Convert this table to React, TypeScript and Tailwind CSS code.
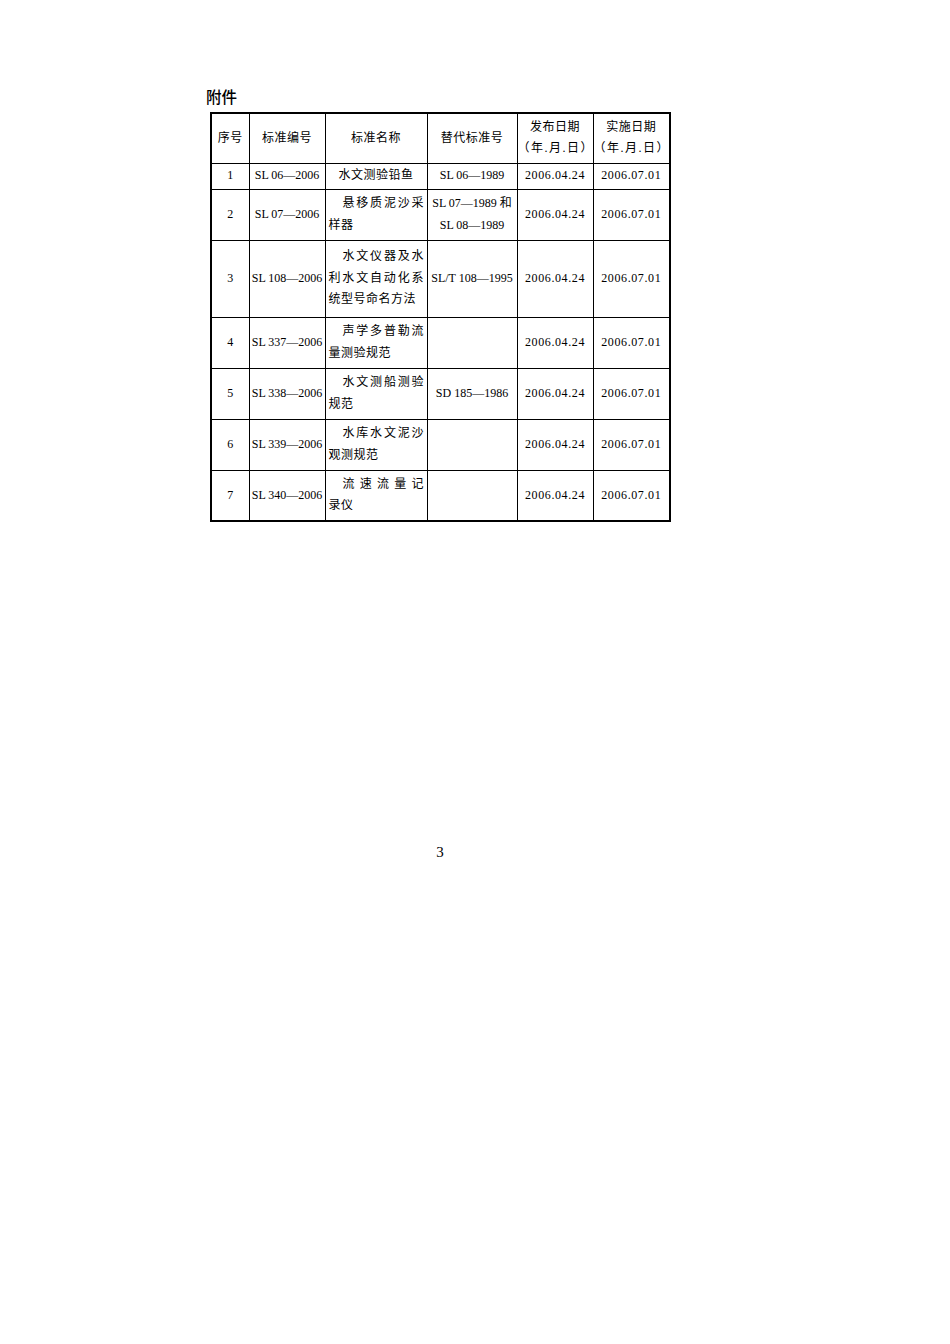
import React from 'react';

type Row = {
  no: string;
  code: string;
  name: string[];
  replaced: string[];
  issued: string;
  effective: string;
  h: string;
};

const rows: Row[] = [
  { no: '1', code: 'SL 06—2006', name: ['水文测验铅鱼'], replaced: ['SL 06—1989'], issued: '2006.04.24', effective: '2006.07.01', h: 'h-[26px]' },
  { no: '2', code: 'SL 07—2006', name: ['悬移质泥沙采', '样器'], replaced: ['SL 07—1989 和', 'SL 08—1989'], issued: '2006.04.24', effective: '2006.07.01', h: 'h-[51px]' },
  { no: '3', code: 'SL 108—2006', name: ['水文仪器及水', '利水文自动化系', '统型号命名方法'], replaced: ['SL/T 108—1995'], issued: '2006.04.24', effective: '2006.07.01', h: 'h-[77px]' },
  { no: '4', code: 'SL 337—2006', name: ['声学多普勒流', '量测验规范'], replaced: [], issued: '2006.04.24', effective: '2006.07.01', h: 'h-[51px]' },
  { no: '5', code: 'SL 338—2006', name: ['水文测船测验', '规范'], replaced: ['SD 185—1986'], issued: '2006.04.24', effective: '2006.07.01', h: 'h-[51px]' },
  { no: '6', code: 'SL 339—2006', name: ['水库水文泥沙', '观测规范'], replaced: [], issued: '2006.04.24', effective: '2006.07.01', h: 'h-[51px]' },
  { no: '7', code: 'SL 340—2006', name: ['流速流量记', '录仪'], replaced: [], issued: '2006.04.24', effective: '2006.07.01', h: 'h-[51px]' },
];

const cell = 'border border-black text-center align-middle p-0';

// 名称栏：首行缩进，除末行外两端对齐
function NameCell({ lines }: { lines: string[] }) {
  if (lines.length === 1) {
    return <div className="tracking-[0.5px]">{lines[0]}</div>;
  }
  return (
    <div className="px-[3px] text-left">
      {lines.map((line, i) => {
        const last = i === lines.length - 1;
        if (last) {
          return (
            <div key={i} className="tracking-[0.5px]">
              {line}
            </div>
          );
        }
        return (
          <div key={i} className={`flex justify-between ${i === 0 ? 'pl-[14px]' : ''}`}>
            {line.split('').map((ch, j) => (
              <span key={j}>{ch}</span>
            ))}
          </div>
        );
      })}
    </div>
  );
}

export default function App() {
  return (
    <div
      className="w-[950px] h-[1344px] bg-white text-black pt-[86px] pl-[206px]"
      style={{ fontFamily: '"Liberation Serif", "Noto Sans CJK SC", serif' }}
    >
      <div
        className="text-[15.5px] leading-[20px] font-medium"
        style={{ fontFamily: '"Noto Sans CJK SC", sans-serif' }}
      >
        附件
      </div>

      <table className="mt-[6px] ml-[4px] border-collapse border-2 border-black text-[12px] leading-[21.5px] table-fixed w-[459px]">
        <colgroup>
          <col className="w-[38px]" />
          <col className="w-[76px]" />
          <col className="w-[102px]" />
          <col className="w-[90px]" />
          <col className="w-[76px]" />
          <col className="w-[77px]" />
        </colgroup>
        <thead>
          <tr className="h-[50px]">
            <th className={`${cell} font-normal tracking-[0.5px]`}>序号</th>
            <th className={`${cell} font-normal tracking-[0.5px]`}>标准编号</th>
            <th className={`${cell} font-normal tracking-[0.5px]`}>标准名称</th>
            <th className={`${cell} font-normal tracking-[0.5px]`}>替代标准号</th>
            <th className={`${cell} font-normal tracking-[0.5px] whitespace-nowrap`}>
              <div>发布日期</div>
              <div className="tracking-[1.5px]">（年.月.日）</div>
            </th>
            <th className={`${cell} font-normal tracking-[0.5px] whitespace-nowrap`}>
              <div>实施日期</div>
              <div className="tracking-[1.5px]">（年.月.日）</div>
            </th>
          </tr>
        </thead>
        <tbody>
          {rows.map((r) => (
            <tr key={r.no} className={r.h}>
              <td className={cell}>{r.no}</td>
              <td className={`${cell} whitespace-nowrap`}>{r.code}</td>
              <td className={cell}>
                <NameCell lines={r.name} />
              </td>
              <td className={`${cell} whitespace-nowrap`}>
                {r.replaced.map((t, i) => (
                  <div key={i}>{t}</div>
                ))}
              </td>
              <td className={`${cell} tracking-[0.6px]`}>{r.issued}</td>
              <td className={`${cell} tracking-[0.6px]`}>{r.effective}</td>
            </tr>
          ))}
        </tbody>
      </table>

      <div className="mt-[320px] w-[468px] text-center text-[15px] leading-[20px]">3</div>
    </div>
  );
}
